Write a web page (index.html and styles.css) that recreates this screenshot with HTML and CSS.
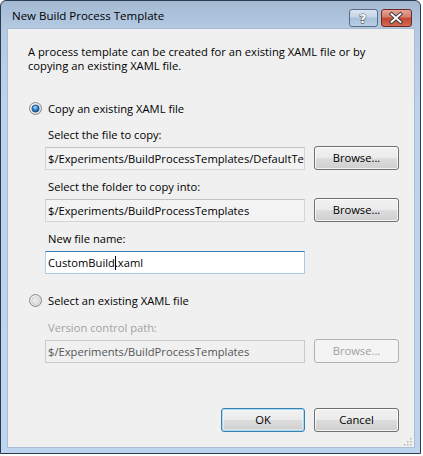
FILE: index.html
```html
<!DOCTYPE html>
<html>
<head>
<meta charset="utf-8">
<link rel="stylesheet" href="styles.css">
</head>
<body>
<div class="window">
  <div class="titlebar">
    <span class="title">New Build Process Template</span>
    <div class="caption-btns">
      <div class="cap help">
        <svg width="29" height="16" viewBox="0 0 29 16"><text x="14.5" y="13" text-anchor="middle" class="capglyph">?</text></svg>
      </div>
      <div class="cap close">
        <svg width="31" height="16" viewBox="0 0 31 16"><path d="M11 4 L20 12 M20 4 L11 12" stroke="#3a3a3a" stroke-width="4" stroke-linecap="square"/><path d="M11 4 L20 12 M20 4 L11 12" stroke="#fff" stroke-width="2" stroke-linecap="square"/></svg>
      </div>
    </div>
  </div>
  <div class="frame">
    <div class="client">
      <p class="desc">A process template can be created for an existing XAML file or by copying an existing XAML file.</p>

      <div class="radio-row first">
        <svg class="radio" width="13" height="13" viewBox="0 0 13 13">
          <defs>
            <radialGradient id="rg1" cx="0.4" cy="0.35" r="0.7"><stop offset="0" stop-color="#ffffff"/><stop offset="1" stop-color="#d4d4d4"/></radialGradient>
            <radialGradient id="dot" cx="0.45" cy="0.35" r="0.7"><stop offset="0" stop-color="#a6dcff"/><stop offset="0.5" stop-color="#2f87d0"/><stop offset="1" stop-color="#0b3d73"/></radialGradient>
          </defs>
          <circle cx="6.5" cy="6.5" r="6" fill="url(#rg1)" stroke="#8a8a8a"/>
          <circle cx="6.5" cy="6.5" r="3.6" fill="url(#dot)" stroke="#1c4c7c" stroke-width="0.8"/>
        </svg>
        <span>Copy an existing XAML file</span>
      </div>

      <div class="group">
        <div class="label l1">Select the file to copy:</div>
        <div class="field-row">
          <div class="textbox ro">$/Experiments/BuildProcessTemplates/DefaultTemplate.xaml</div>
          <div class="btn">Browse...</div>
        </div>
        <div class="label">Select the folder to copy into:</div>
        <div class="field-row">
          <div class="textbox ro">$/Experiments/BuildProcessTemplates</div>
          <div class="btn">Browse...</div>
        </div>
        <div class="label l3">New file name:</div>
        <div class="field-row">
          <div class="textbox focus">CustomBuild<span class="caret"></span>.xaml</div>
        </div>
      </div>

      <div class="radio-row second">
        <svg class="radio" width="13" height="13" viewBox="0 0 13 13">
          <defs>
            <radialGradient id="rg2" cx="0.4" cy="0.35" r="0.7"><stop offset="0" stop-color="#ffffff"/><stop offset="1" stop-color="#d4d4d4"/></radialGradient>
          </defs>
          <circle cx="6.5" cy="6.5" r="6" fill="url(#rg2)" stroke="#8a8a8a"/>
          <circle cx="6.5" cy="6.5" r="3.8" fill="#e8e8e8" stroke="#c4c4c4" stroke-width="0.6"/>
        </svg>
        <span>Select an existing XAML file</span>
      </div>

      <div class="group">
        <div class="label disabled l4">Version control path:</div>
        <div class="field-row">
          <div class="textbox dis">$/Experiments/BuildProcessTemplates</div>
          <div class="btn dis">Browse...</div>
        </div>
      </div>

      <div class="footer">
        <div class="btn default">OK</div>
        <div class="btn">Cancel</div>
      </div>
      <div class="grip">
        <svg width="8" height="8" viewBox="0 0 8 8" fill="#b8b8b8">
          <rect x="6" y="0" width="1.5" height="1.5"/>
          <rect x="3" y="3" width="1.5" height="1.5"/><rect x="6" y="3" width="1.5" height="1.5"/>
          <rect x="0" y="6" width="1.5" height="1.5"/><rect x="3" y="6" width="1.5" height="1.5"/><rect x="6" y="6" width="1.5" height="1.5"/>
        </svg>
      </div>
    </div>
  </div>
</div>
</body>
</html>
```
FILE: styles.css
```css
html, body {
  margin: 0;
  padding: 0;
  background: #ffffff;
  width: 423px;
  height: 456px;
  overflow: hidden;
}
body {
  font-family: "Open Sans", "Noto Sans", sans-serif;
  font-size: 11.2px;
  color: #000;
}
.window {
  width: 419px;
  height: 452px;
  border: 1px solid #2b3a4e;
  border-radius: 6px 6px 0 0;
  background: linear-gradient(to bottom, #a4b9d2 0px, #b4cae3 28px, #bcd3ec 100px, #bed5ee 100%);
  display: flex;
  flex-direction: column;
}
.titlebar {
  height: 28px;
  display: flex;
  align-items: flex-start;
  justify-content: space-between;
  box-sizing: border-box;
}
.title {
  font-family: "Open Sans", sans-serif;
  font-size: 11.5px;
  color: #000;
  padding: 7px 0 0 11px;
  line-height: 16px;
}
.caption-btns {
  display: flex;
  gap: 3px;
  padding: 8px 8px 0 0;
}
.cap {
  height: 16px;
  border: 1px solid #5a6d85;
  border-radius: 3px;
  box-sizing: content-box;
  display: flex;
}
.help {
  width: 27px;
  background: linear-gradient(to bottom, #dbe6f2 0%, #c3d4e8 45%, #a8bfda 50%, #b9cfe6 100%);
}
.close {
  width: 29px;
  border-color: #6e2a22;
  background: linear-gradient(to bottom, #e8a597 0%, #d37b69 45%, #c2442f 50%, #d36b52 100%);
}
.help svg, .close svg { margin-left: -1px; }
.capglyph {
  font-family: "DejaVu Sans", sans-serif;
  font-weight: bold;
  font-size: 13px;
  fill: #fff;
  stroke: #3a3a3a;
  stroke-width: 1;
  paint-order: stroke;
}
.frame {
  flex: 1;
  padding: 0 6px 6px 7px;
  display: flex;
}
.client {
  flex: 1;
  background: #f0f0f0;
  padding: 16px 15px 0 20px;
  box-sizing: border-box;
  position: relative;
  box-shadow: 0 0 0 1px #a9bdd4;
}
.desc {
  margin: 0;
  line-height: 14px;
  width: 370px;
}
.radio-row {
  display: flex;
  align-items: center;
  height: 16px;
  gap: 6px;
}
.radio-row.first { margin-top: 27px; }
.radio-row.second { margin-top: 18px; }
.radio { margin-left: 1px; }
.group {
  margin-left: 17px;
}
.label {
  line-height: 14px;
  margin-top: 10px;
  padding-left: 3px;
}
.label.l1 { margin-top: 12px; }
.label.l3 { margin-top: 10px; }
.label.l4 { margin-top: 13px; }
.label.disabled { color: #a3a3a3; }
.field-row {
  display: flex;
  align-items: center;
  gap: 9px;
  margin-top: 4px;
  height: 24px;
}
.textbox {
  width: 260px;
  height: 23px;
  box-sizing: border-box;
  border: 1px solid #d5d5d5;
  border-top-color: #c3c3c3;
  padding: 0 2px;
  line-height: 21px;
  white-space: nowrap;
  overflow: hidden;
  background: #f0f0f0;
}
.textbox.ro { background: #f3f3f3; }
.textbox.focus {
  background: #ffffff;
  border-color: #a9cbe6;
  border-top-color: #3d7bad;
  border-left-color: #b5cfe7;
}
.textbox.dis {
  border-color: #c9c9c9;
  color: #555;
}
.caret {
  display: inline-block;
  width: 1px;
  height: 14px;
  background: #000;
  vertical-align: -3px;
  margin-right: -1px;
}
.btn {
  width: 85px;
  height: 24px;
  box-sizing: border-box;
  border: 1px solid #707070;
  border-radius: 3px;
  background: linear-gradient(to bottom, #f2f2f2 0%, #ebebeb 48%, #dddddd 50%, #cfcfcf 100%);
  box-shadow: inset 0 0 0 1px rgba(255,255,255,0.75);
  display: flex;
  align-items: center;
  justify-content: center;
  line-height: 14px;
}
.btn.dis {
  border-color: #adb2b5;
  background: #f4f4f4;
  color: #a0a0a0;
  box-shadow: none;
}
.btn.default {
  border-color: #3c7fb1;
  box-shadow: inset 0 0 0 1px #a6dbf4, inset 0 0 0 2px rgba(255,255,255,0.4);
}
.footer {
  display: flex;
  justify-content: flex-end;
  gap: 9px;
  margin-top: 45px;
}
.footer .btn:first-child { width: 84px; }
.grip {
  position: absolute;
  right: 2px;
  bottom: 1px;
  width: 8px;
  height: 8px;
}
.grip svg { display: block; }
```
